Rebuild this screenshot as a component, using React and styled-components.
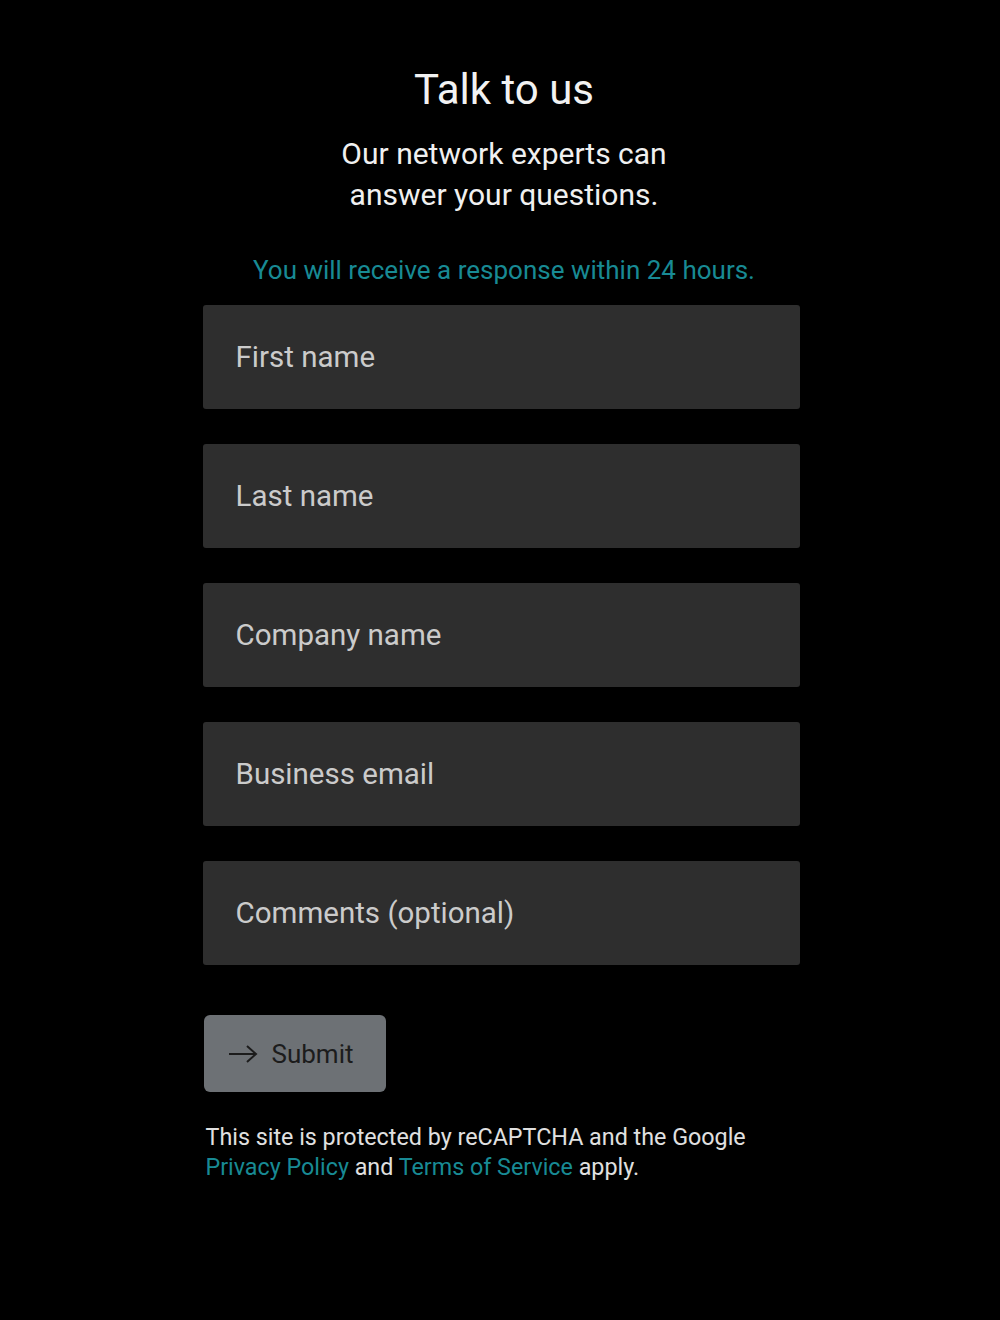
import React from 'react';
import styled, { createGlobalStyle } from 'styled-components';

const GlobalStyle = createGlobalStyle`
  html, body {
    margin: 0;
    padding: 0;
    background: #000;
  }
  body {
    font-family: Roboto, "Liberation Sans", sans-serif;
    color: #fff;
  }
`;

const Page = styled.div`
  min-height: 1320px;
  background: #000;
  padding: 64px 0 0 2px;
  box-sizing: border-box;
`;

const Column = styled.div`
  width: 597px;
  margin: 0 auto;
  padding-left: 6px;
  box-sizing: border-box;
  display: flex;
  flex-direction: column;
`;

const Title = styled.h1`
  margin: 0;
  text-align: center;
  font-weight: 400;
  font-size: 42px;
  line-height: 52px;
  color: #f2f2f2;
`;

const Subtitle = styled.p`
  margin: 17px 0 0;
  text-align: center;
  font-size: 30px;
  line-height: 41px;
  color: #f0f0f0;
`;

const Notice = styled.p`
  margin: 38px 0 0;
  text-align: center;
  font-size: 26px;
  line-height: 34px;
  color: #188a94;
`;

const Form = styled.form`
  margin: 18px 0 0 -6px;
  display: flex;
  flex-direction: column;
  gap: 35px;
`;

const Field = styled.input`
  height: 104px;
  box-sizing: border-box;
  border: none;
  border-radius: 3px;
  background: #2e2e2e;
  padding: 0 33px;
  font-family: inherit;
  font-size: 29.5px;
  color: #eee;
  outline: none;

  &::placeholder {
    color: #cbcbcb;
  }
`;

const SubmitButton = styled.button`
  margin: 50px 0 0 -5px;
  width: 182px;
  height: 77px;
  border: none;
  border-radius: 6px;
  background: #6d7175;
  display: flex;
  align-items: center;
  gap: 14px;
  padding: 0 0 0 24px;
  font-family: inherit;
  font-size: 26px;
  color: #1c1c1c;
  cursor: pointer;
`;

const Legal = styled.p`
  margin: 30px 0 0 -3px;
  font-size: 23.3px;
  line-height: 30px;
  color: #e0e0e0;
`;

const Link = styled.a`
  color: #188a94;
  text-decoration: none;
`;

const Arrow = () => (
  <svg width="30" height="20" viewBox="0 0 30 20" fill="none" stroke="#1c1c1c" strokeWidth="2">
    <path d="M1 10 H28" />
    <path d="M19 2 L28 10 L19 18" />
  </svg>
);

const fields = ['First name', 'Last name', 'Company name', 'Business email', 'Comments (optional)'];

export default function App() {
  return (
    <Page>
      <GlobalStyle />
      <Column>
        <Title>Talk to us</Title>
        <Subtitle>
          Our network experts can
          <br />
          answer your questions.
        </Subtitle>
        <Notice>You will receive a response within 24 hours.</Notice>
        <Form onSubmit={(e) => e.preventDefault()}>
          {fields.map((f) => (
            <Field key={f} placeholder={f} />
          ))}
        </Form>
        <SubmitButton type="button">
          <Arrow />
          Submit
        </SubmitButton>
        <Legal>
          This site is protected by reCAPTCHA and the Google
          <br />
          <Link href="#">Privacy Policy</Link> and <Link href="#">Terms of Service</Link> apply.
        </Legal>
      </Column>
    </Page>
  );
}
